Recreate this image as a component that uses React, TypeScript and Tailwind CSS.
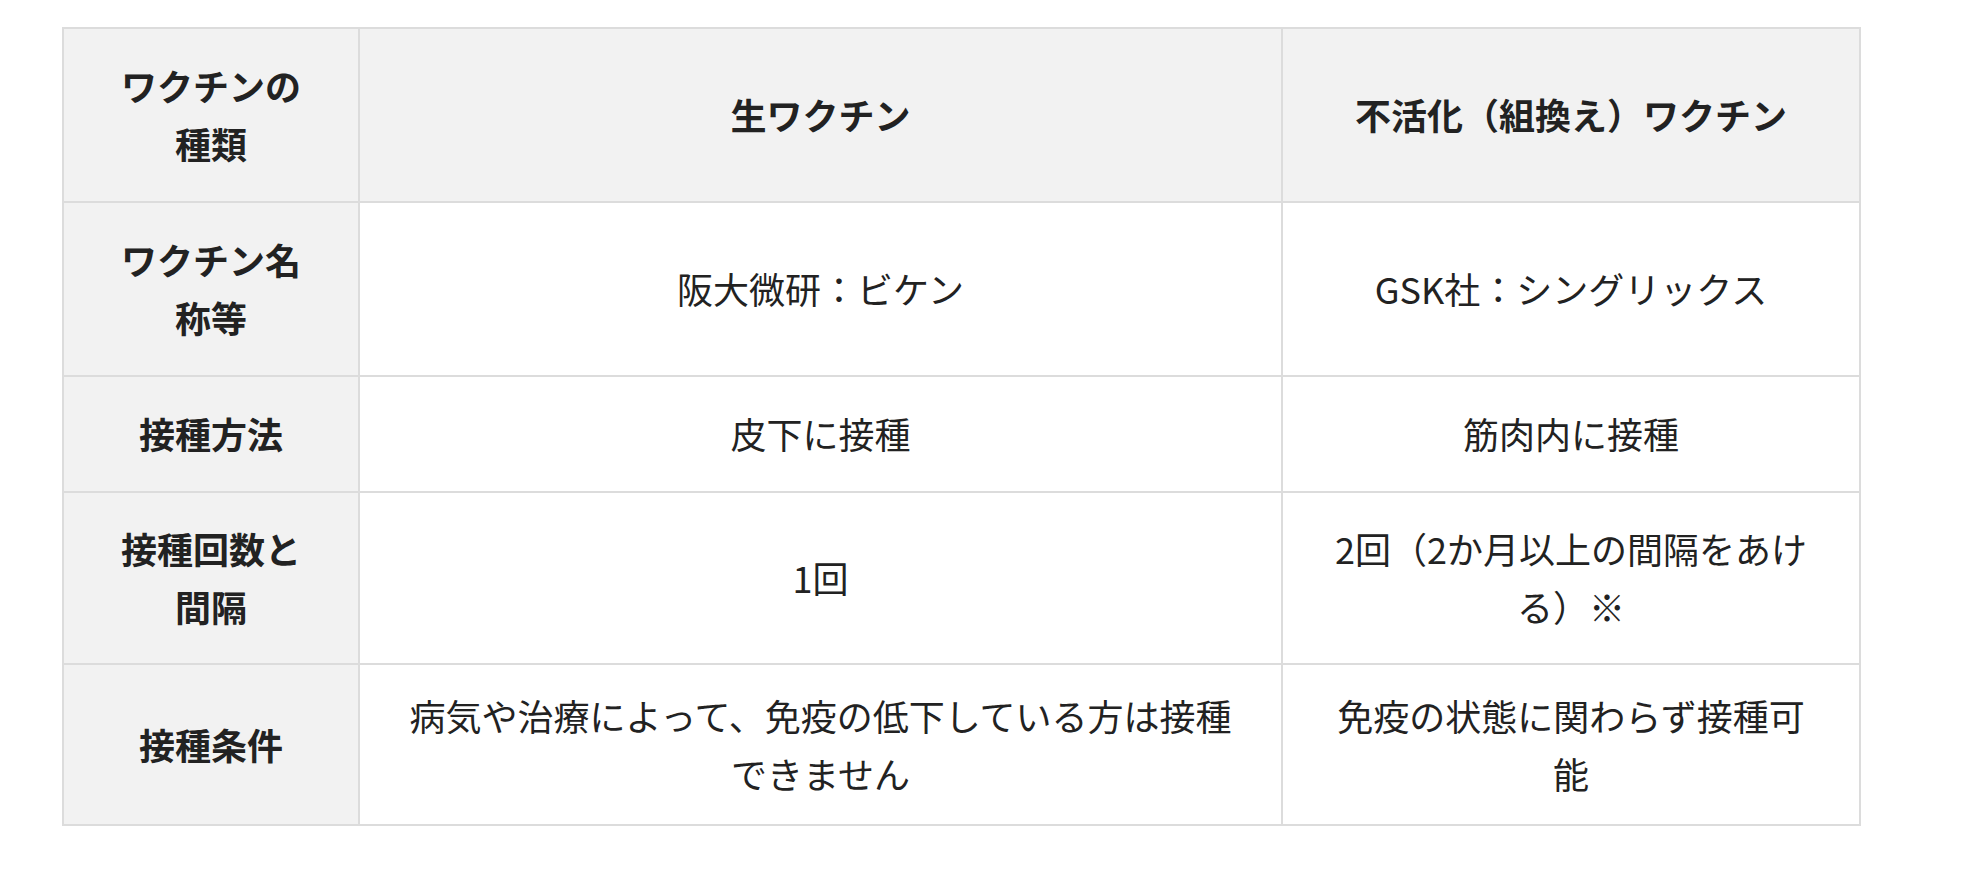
import React from 'react';

type Row = {
  label: string;
  live: string;
  inactivated: string;
  height: string;
};

const rows: Row[] = [
  {
    label: 'ワクチン名称等',
    live: '阪大微研：ビケン',
    inactivated: 'GSK社：シングリックス',
    height: 'h-[174px]',
  },
  {
    label: '接種方法',
    live: '皮下に接種',
    inactivated: '筋肉内に接種',
    height: 'h-[116px]',
  },
  {
    label: '接種回数と間隔',
    live: '1回',
    inactivated: '2回（2か月以上の間隔をあける）※',
    height: 'h-[172px]',
  },
  {
    label: '接種条件',
    live: '病気や治療によって、免疫の低下している方は接種できません',
    inactivated: '免疫の状態に関わらず接種可能',
    height: 'h-[161px]',
  },
];

const cellBase =
  'border-2 border-[#dcdcdc] px-[40px] py-[20px] text-center align-middle';

export default function App() {
  return (
    <div className="min-h-screen bg-white pt-[27px] pl-[62px] text-[36px] leading-[1.6] text-[#222] font-['Hiragino_Sans','Noto_Sans_CJK_JP',sans-serif]">
      <table className="w-[1797px] table-fixed border-collapse">
        <colgroup>
          <col className="w-[296px]" />
          <col className="w-[923px]" />
          <col className="w-[578px]" />
        </colgroup>
        <thead>
          <tr className="h-[174px] bg-[#f2f2f2]">
            <th className={`${cellBase} font-bold`}>ワクチンの種類</th>
            <th className={`${cellBase} font-bold`}>生ワクチン</th>
            <th className={`${cellBase} font-bold`}>不活化（組換え）ワクチン</th>
          </tr>
        </thead>
        <tbody>
          {rows.map((row) => (
            <tr key={row.label} className={row.height}>
              <th className={`${cellBase} bg-[#f2f2f2] font-bold`}>{row.label}</th>
              <td className={`${cellBase} font-normal`}>{row.live}</td>
              <td className={`${cellBase} font-normal`}>{row.inactivated}</td>
            </tr>
          ))}
        </tbody>
      </table>
    </div>
  );
}
